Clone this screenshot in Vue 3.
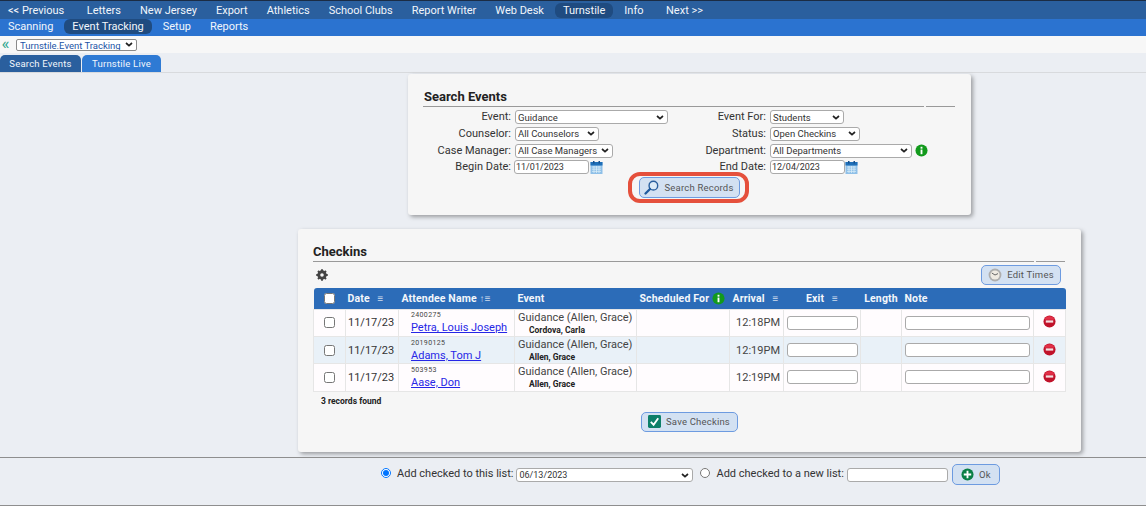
<script setup>
const topNav = [
  { label: '<< Previous', first: true }, { label: 'Letters' }, { label: 'New Jersey' }, { label: 'Export' },
  { label: 'Athletics' }, { label: 'School Clubs' }, { label: 'Report Writer' }, { label: 'Web Desk' },
  { label: 'Turnstile', active: true }, { label: 'Info' }, { label: 'Next >>', wide: true }
]
const subNav = [
  { label: 'Scanning' }, { label: 'Event Tracking', active: true }, { label: 'Setup' }, { label: 'Reports' }
]
const rows = [
  { id: '2400275', name: 'Petra, Louis Joseph', by: 'Cordova, Carla', time: '12:18PM' },
  { id: '20190125', name: 'Adams, Tom J', by: 'Allen, Grace', time: '12:19PM' },
  { id: '503953', name: 'Aase, Don', by: 'Allen, Grace', time: '12:19PM' }
]
</script>

<template>
  <div class="page">
    <nav class="top">
      <a v-for="n in topNav" :key="n.label" class="item" :class="{ on: n.active, wide: n.wide, first: n.first }">{{ n.label }}</a>
    </nav>
    <nav class="sub">
      <a v-for="n in subNav" :key="n.label" class="item" :class="{ on: n.active }">{{ n.label }}</a>
    </nav>
    <div class="crumb">
      <span class="chev">«</span>
      <select class="crumb-select"><option>Turnstile.Event Tracking</option></select>
    </div>
    <div class="tabs">
      <span class="tab dark">Search Events</span>
      <span class="tab light">Turnstile Live</span>
    </div>

    <main class="main">
      <section class="card search">
        <h2 class="title"><span class="t-main">Search Events</span><span class="t-end"></span></h2>
        <div class="form">
          <label>Event:</label>
          <div><select class="w153"><option>Guidance</option></select></div>
          <label>Event For:</label>
          <div><select class="w74"><option>Students</option></select></div>

          <label>Counselor:</label>
          <div><select class="w84"><option>All Counselors</option></select></div>
          <label>Status:</label>
          <div><select class="w90"><option>Open Checkins</option></select></div>

          <label>Case Manager:</label>
          <div><select class="w98"><option>All Case Managers</option></select></div>
          <label>Department:</label>
          <div class="inline">
            <select class="w142"><option>All Departments</option></select>
            <svg class="info" viewBox="0 0 14 14"><circle cx="7" cy="7" r="6.5" fill="#129a1c"/><rect x="6" y="6" width="2" height="5" fill="#fff"/><rect x="6" y="3" width="2" height="2" fill="#fff"/></svg>
          </div>

          <label>Begin Date:</label>
          <div class="inline">
            <input class="date begin" value="11/01/2023" />
            <svg class="cal" viewBox="0 0 13 13"><rect x="0.5" y="1" width="12" height="12" fill="#8fc0e8"/><rect x="0.5" y="1" width="12" height="3.5" fill="#1f6fb8"/><rect x="3" y="0" width="1.5" height="2.5" fill="#164f8a"/><rect x="8.5" y="0" width="1.5" height="2.5" fill="#164f8a"/><path d="M2 6h9M2 8.2h9M2 10.4h9M4 5v7M6.5 5v7M9 5v7" stroke="#d8ecf8" stroke-width="0.8"/></svg>
          </div>
          <label>End Date:</label>
          <div class="inline">
            <input class="date" value="12/04/2023" />
            <svg class="cal" viewBox="0 0 13 13"><rect x="0.5" y="1" width="12" height="12" fill="#8fc0e8"/><rect x="0.5" y="1" width="12" height="3.5" fill="#1f6fb8"/><rect x="3" y="0" width="1.5" height="2.5" fill="#164f8a"/><rect x="8.5" y="0" width="1.5" height="2.5" fill="#164f8a"/><path d="M2 6h9M2 8.2h9M2 10.4h9M4 5v7M6.5 5v7M9 5v7" stroke="#d8ecf8" stroke-width="0.8"/></svg>
          </div>
        </div>
        <div class="search-action">
          <div class="highlight">
            <button class="btn search-btn">
              <svg class="ico" viewBox="0 0 16 16"><circle cx="10" cy="6" r="4.6" fill="#dcebf8" stroke="#2a5f9e" stroke-width="1.5"/><path d="M6.4 9.6 1.6 14.4" stroke="#1f5a9e" stroke-width="2.4" stroke-linecap="round"/></svg>
              Search Records
            </button>
          </div>
        </div>
      </section>

      <section class="card checkins">
        <h2 class="title"><span class="t-main">Checkins</span><span class="t-end"></span></h2>
        <div class="tools">
          <svg class="gear" viewBox="0 0 14 14"><circle cx="7" cy="7" r="3.8" fill="none" stroke="#444" stroke-width="3.4"/><path d="M7 0.3v3M7 10.7v3M0.3 7h3M10.7 7h3M2.3 2.3l2.1 2.1M9.6 9.6l2.1 2.1M11.7 2.3 9.6 4.4M4.4 9.6l-2.1 2.1" stroke="#444" stroke-width="2.2"/></svg>
          <button class="btn edit-btn">
            <svg class="ico-clock" viewBox="0 0 14 14"><circle cx="7" cy="7" r="6.4" fill="#aeaeae"/><circle cx="7" cy="7" r="4.6" fill="#efeae2"/><path d="M7 7 3.8 5M7 7l3-1.4" stroke="#666" stroke-width="1"/></svg>
            Edit Times
          </button>
        </div>
        <table class="grid">
          <colgroup>
            <col class="c1" /><col class="c2" /><col class="c3" /><col class="c4" /><col class="c5" />
            <col class="c6" /><col class="c7" /><col class="c8" /><col class="c9" /><col class="c10" />
          </colgroup>
          <thead>
            <tr>
              <th class="center"><input type="checkbox" class="chk" /></th>
              <th class="th-date">Date <span class="sort sort-date">≡</span></th>
              <th>Attendee Name <span class="sort">↑≡</span></th>
              <th>Event</th>
              <th class="sched">
                <span class="sched-in">Scheduled For
                  <svg class="info-sm" viewBox="0 0 14 14"><circle cx="7" cy="7" r="6.5" fill="#129a1c"/><rect x="6" y="6" width="2" height="5" fill="#fff"/><rect x="6" y="3" width="2" height="2" fill="#fff"/></svg>
                </span>
              </th>
              <th>Arrival <span class="sort sort-date">≡</span></th>
              <th class="center">Exit <span class="sort sort-date">≡</span></th>
              <th class="center">Length</th>
              <th>Note</th>
              <th></th>
            </tr>
          </thead>
          <tbody>
            <tr v-for="r in rows" :key="r.id">
              <td class="center"><input type="checkbox" class="chk" /></td>
              <td class="date-cell">11/17/23</td>
              <td class="who">
                <div class="sid">{{ r.id }}</div>
                <a class="name">{{ r.name }}</a>
              </td>
              <td class="ev">
                <div>Guidance (Allen, Grace)</div>
                <div class="by">{{ r.by }}</div>
              </td>
              <td></td>
              <td class="time">{{ r.time }}</td>
              <td class="center"><input class="exit" /></td>
              <td></td>
              <td class="center"><input class="note" /></td>
              <td class="center del-cell">
                <svg class="del" viewBox="0 0 14 14"><circle cx="7" cy="7" r="6.5" fill="#c0122a"/><path d="M1.5 5a6 6 0 0 1 11 0z" fill="#e23048"/><rect x="3" y="5.8" width="8" height="2.4" fill="#f5dfe0"/></svg>
              </td>
            </tr>
          </tbody>
        </table>
        <p class="count">3 records found</p>
        <div class="save-wrap">
          <button class="btn save-btn">
            <svg class="ico-check" viewBox="0 0 14 14"><rect width="14" height="14" rx="1.5" fill="#0d7f68"/><path d="M3 7.5 6 10.5 11 3.5" fill="none" stroke="#fff" stroke-width="2"/></svg>
            Save Checkins
          </button>
        </div>
      </section>
    </main>

    <footer class="foot">
      <input type="radio" name="dest" class="radio" checked />
      <span class="foot-text">Add checked to this list:</span>
      <select class="list"><option>06/13/2023</option></select>
      <input type="radio" name="dest" class="radio second" />
      <span class="foot-text">Add checked to a new list:</span>
      <input class="newlist" />
      <button class="btn ok-btn">
        <svg class="ico-plus" viewBox="0 0 14 14"><circle cx="7" cy="7" r="6.5" fill="#0a7f45"/><path d="M7 3v8M3 7h8" stroke="#fff" stroke-width="2"/></svg>
        Ok
      </button>
    </footer>
  </div>
</template>

<style scoped>
.page {
  height: 506px;
  overflow: hidden;
  display: flex;
  flex-direction: column;
  background: #ebeef3;
  font-family: Roboto, "Liberation Sans", sans-serif;
  font-size: 11px;
  color: #333;
}
select, input, button { font-family: inherit; box-sizing: border-box; }
select, input:not([type]) {
  height: 14px;
  margin: 0;
  font-size: 9.5px;
  color: #333;
  background-color: #fff;
  border: 1px solid #aaa;
  border-radius: 3px;
}
select {
  appearance: none;
  padding: 0 12px 0 2px;
  background-image: url("data:image/svg+xml,%3Csvg xmlns='http://www.w3.org/2000/svg' width='8' height='5'%3E%3Cpath d='M1 1l3 2.6L7 1' fill='none' stroke='%23222' stroke-width='1.7'/%3E%3C/svg%3E");
  background-repeat: no-repeat;
  background-position: right 3px center;
}
input:not([type]) { padding: 0 1px; font-size: 9px; }
.top {
  height: 19px;
  box-sizing: border-box;
  border-top: 1px solid #1b2c44;
  padding-top: 1px;
  background: #2a5f9e;
  display: flex;
  align-items: center;
  gap: 3px;
}
.sub {
  height: 17px;
  box-sizing: border-box;
  padding-bottom: 2px;
  background: #2b73d0;
  display: flex;
  align-items: center;
  gap: 3px;
}
.item {
  color: #f2f6fb;
  font-size: 11px;
  padding: 0 8px;
  line-height: 15px;
  border-radius: 6px;
}
.item.on { background: #1f4b80; }
.item.first { margin-right: 3.5px; }
.item.wide { margin-left: 3.5px; }
.crumb {
  height: 17px;
  background: #f7f7f7;
  display: flex;
  align-items: center;
  padding-left: 1.5px;
  box-sizing: border-box;
}
.chev { color: #2aa58c; font-size: 17px; line-height: 14px; width: 14.5px; margin-top: -3px; }
.crumb-select {
  width: 121px;
  height: 12px;
  font-size: 9.5px;
  padding-left: 3px;
  color: #1d55a6;
  border: 1px solid #8a8a8a;
  border-radius: 2px;
}
.tabs {
  height: 20px;
  box-sizing: border-box;
  padding-top: 2px;
  display: flex;
  gap: 1px;
  border-bottom: 1px solid #d8dadd;
}
.tab {
  color: #f2f6fb;
  font-size: 9.5px;
  letter-spacing: 0.2px;
  line-height: 17px;
  text-align: center;
  border-radius: 5px 5px 0 0;
}
.tab.dark { width: 81px; background: #2a5f9e; }
.tab.light { width: 79px; background: #2e7ad4; }
.main {
  flex: 1;
  min-height: 0;
  padding: 1px 65px 0 298px;
  display: flex;
  flex-direction: column;
  align-items: center;
}
.card {
  background: #f6f6f6;
  border-radius: 3px;
  box-shadow: 2px 2px 4px rgba(0, 0, 0, 0.35);
  box-sizing: border-box;
}
.search { width: 563px; height: 141px; padding: 16px 16px 0 15px; }
.checkins { width: 783px; height: 223px; margin-top: 14px; padding: 16px 16px 0 15px; }
.title {
  margin: 0;
  display: flex;
  gap: 2px;
  font-size: 13px;
  line-height: 14px;
  height: 16px;
  color: #222;
  font-weight: 700;
}
.t-main { flex: 1; border-bottom: 1px solid #999; height: 16px; }
.search .t-main { padding-left: 1px; }
.t-end { width: 29px; border-bottom: 1px solid #999; height: 16px; }
.form {
  margin-top: 3px;
  display: grid;
  grid-template-columns: 88px 171px 76px auto;
  column-gap: 4px;
  grid-auto-rows: 16.67px;
  align-items: center;
}
.form label { text-align: right; font-size: 11px; color: #333; line-height: 14px; }
.form > div { display: flex; align-items: center; }
.inline { gap: 3px; }
.w153 { width: 153px; } .w74 { width: 74px; } .w84 { width: 84px; }
.w90 { width: 90px; } .w98 { width: 98px; } .w142 { width: 142px; }
.date { width: 75px; height: 14px; }
.begin { transform: translateX(-1px); }
.info { width: 13px; height: 13px; }
.cal { width: 13px; height: 13px; margin-left: -3px; }
.search-action { display: flex; justify-content: center; padding-right: 2px; }
.highlight {
  margin-top: -4px;
  padding: 1px 5px 1px 7px;
  border: 4px solid #e5503c;
  border-radius: 12px;
  display: flex;
}
.btn {
  display: flex;
  align-items: center;
  justify-content: center;
  gap: 5px;
  padding: 0;
  background: #d3e1f2;
  border: 1px solid #6d9be0;
  border-radius: 5px;
  color: #555;
  font-size: 9.5px;
  letter-spacing: 0.2px;
  height: 21px;
}
.search-btn { width: 101px; }
.ico { width: 15px; height: 15px; }
.tools {
  height: 27px;
  display: flex;
  align-items: center;
  justify-content: space-between;
  padding: 0 4px 0 3px;
}
.gear { width: 12px; height: 12px; }
.edit-btn { width: 80px; height: 20px; }
.ico-clock { width: 14px; height: 14px; }
.grid {
  width: 752px;
  border-collapse: collapse;
  table-layout: fixed;
}
.c1 { width: 32px; } .c2 { width: 53px; } .c3 { width: 116px; } .c4 { width: 122px; }
.c5 { width: 93px; } .c6 { width: 54px; } .c7 { width: 77px; } .c8 { width: 41px; }
.c9 { width: 132px; } .c10 { width: 32px; }
th {
  height: 21px;
  padding: 1px 0 0 3px;
  box-sizing: border-box;
  background: #2c6cb8;
  color: #f4f7fb;
  font-size: 10.5px;
  letter-spacing: 0.15px;
  font-weight: 700;
  text-align: left;
  white-space: nowrap;
}
thead th:first-child { border-top-left-radius: 3px; }
thead th:last-child { border-top-right-radius: 3px; }
th.center, td.center { text-align: center; padding: 0; }
.th-date { padding-left: 2px; }
.sort { font-size: 10px; font-weight: 400; color: #cfdcee; }
.sort-date { margin-left: 5px; }
.sched-in { display: inline-flex; align-items: center; gap: 3px; }
.info-sm { width: 13px; height: 13px; }
.chk { width: 11px; height: 11px; margin: 0 0 1px; vertical-align: middle; }
td {
  height: 27.4px;
  padding: 0 0 0 3px;
  box-sizing: border-box;
  background: #fffcfe;
  border: 1px solid #e6e6e6;
  font-size: 11px;
  color: #444;
  white-space: nowrap;
}
tbody tr:nth-child(2) td { background: #e9f1f8; }
.date-cell { color: #333; padding-left: 2px; }
.who { padding: 1px 0 0 12px; }
.sid { font-size: 7px; letter-spacing: 0.35px; line-height: 9px; color: #444; }
.name { display: block; color: #2626e6; text-decoration: underline; font-size: 11px; line-height: 15px; }
.ev { line-height: 13px; padding-top: 1px; }
.by { font-size: 8.5px; line-height: 11px; margin-top: 1px; font-weight: 700; color: #222; padding-left: 11px; }
.time { text-align: right; padding: 0 3px 0 0; }
.exit { width: 71px; }
.note { width: 125px; }
.del-cell { padding-right: 1px !important; }
.del { width: 13px; height: 13px; vertical-align: middle; margin-top: -3px; }
.count { margin: 4px 0 0 8px; font-size: 8.5px; line-height: 10px; font-weight: 700; color: #222; }
.save-wrap { display: flex; justify-content: center; margin-top: 6px; }
.save-btn { width: 97px; height: 20px; }
.ico-check { width: 13px; height: 13px; }
.foot {
  height: 49px;
  box-sizing: border-box;
  border-top: 1px solid #8e8e8e;
  border-bottom: 1px solid #8e8e8e;
  padding: 6px 0 0 381px;
  display: flex;
  align-items: flex-start;
}
.radio { width: 10px; height: 10px; margin: 4px 6px 0 0; }
.second { margin-left: 7px; }
.foot-text { font-size: 11px; line-height: 20px; margin-right: 3px; color: #333; }
.list { width: 177px; height: 14px; margin-top: 4px; font-size: 9px; }
.foot .newlist { width: 101px; height: 14px; margin-top: 4px; margin-right: 4px; }
.ok-btn { width: 48px; height: 21px; }
.ico-plus { width: 13px; height: 13px; }
</style>
